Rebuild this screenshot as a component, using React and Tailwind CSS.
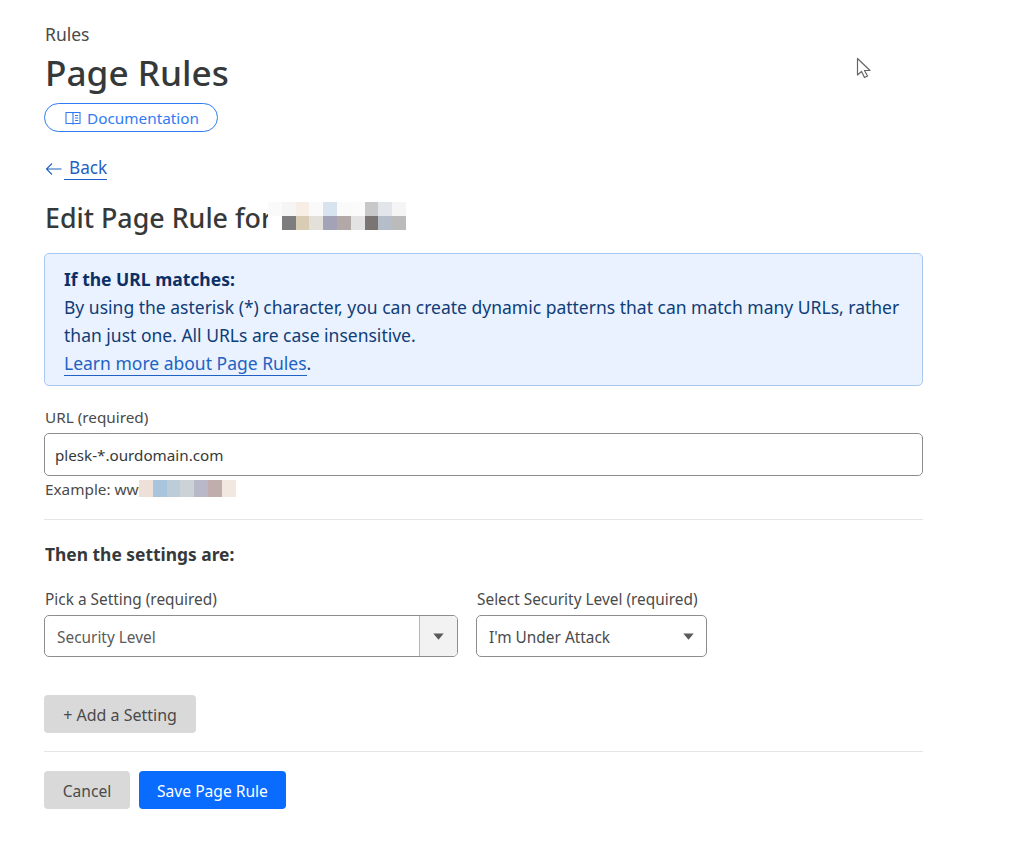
const headTop = ["#fafafa","#f5f5f5","#f7efe5","#fafafa","#d8e3f0","#fafafa","#fbfbfb","#c8c8c8","#e2e5ea","#f5f5f5"];
const headBottom = ["#ffffff","#7d7d80","#d8ccb5","#e3e0da","#a3a3b8","#b3a8a8","#e3e3e3","#7a7472","#b5bdc8","#bbbbbb"];
const exampleCells = ["#ede0d8","#a9c5dc","#bccdd9","#ccd3d6","#b8b8c8","#bfaead","#f3e8e0"];

function Cells({ colors, tall }) {
  return (
    <div className="flex">
      {colors.map((c, i) => (
        <div key={i} className={tall ? "w-[13.8px] h-[17px]" : "w-[13.8px] h-[14px]"} style={{ background: c }} />
      ))}
    </div>
  );
}

function Caret() {
  return (
    <svg width="11" height="7" viewBox="0 0 11 7" className="block mt-[1px]">
      <path d="M0.3 0.5h10.4L5.5 6.7z" fill="#5a5a5a" />
    </svg>
  );
}

export default function App() {
  return (
    <div className="relative w-[1024px] h-[846px] bg-white overflow-hidden text-[#36393a] font-['Noto_Sans',sans-serif]">
      <svg width="18" height="24" viewBox="0 0 18 24" className="absolute left-[856px] top-[57px]">
        <path d="M1.5 1.5v16.5l4-3.5 3 6 3-1.5-3-5.5h5.5z" fill="#fff" stroke="#666" strokeWidth="1.2" strokeLinejoin="round" />
      </svg>
      <div className="w-[879px] ml-[44px] pt-[23px]">
        <div className="text-[17.5px] leading-[22px] text-[#4a4a4a] ml-[1px]">Rules</div>
        <h1 className="text-[35.2px] leading-[48px] font-medium ml-[1px] mt-[3px]">Page Rules</h1>
        <a className="mt-[7px] flex w-[174px] h-[29px] items-center justify-center gap-[6px] rounded-full border border-[#2f7bf6] pl-[2px] text-[#2f7bf6] text-[15.3px] bg-white">
          <svg width="16" height="14" viewBox="0 0 16 14" fill="none" stroke="#2f7bf6" strokeWidth="1.1">
            <path d="M1 1.5h6.5l.5.5.5-.5H15v11H8.5l-.5.5-.5-.5H1z" />
            <path d="M8 2v10.5" />
            <path d="M10 4.5h3.2M10 7h3.2M10 9.5h3.2" />
          </svg>
          <span className="pt-[1px]">Documentation</span>
        </a>
        <div className="mt-[22px] flex items-start ml-[1px] h-[28px]">
          <svg width="18" height="14" viewBox="0 0 18 14" fill="none" stroke="#1f62c4" strokeWidth="1.1" className="mt-[8px]">
            <path d="M16.5 7H1.5M7 1.5 1.5 7 7 12.5" />
          </svg>
          <a className="ml-[1px] mt-[3px] pl-[5px] text-[17.2px] leading-[22px] text-[#1f62c4] border-b-[1.5px] border-[#1f62c4]">Back</a>
        </div>
        <div className="mt-[19px] flex items-start h-[34px]">
          <h2 className="w-[223px] whitespace-nowrap ml-[1px] text-[26.8px] leading-[34px] font-medium">Edit Page Rule for</h2>
          <div className="relative flex flex-col mt-[1px]">
            <Cells colors={headTop} />
            <Cells colors={headBottom} />
          </div>
        </div>
        <div className="mt-[18px] h-[133px] rounded-[5px] border border-[#a9c8f0] bg-[#e9f2fe] pl-[19px] pr-3 pt-[11px] text-[17.5px] leading-[28px] text-[#0f3d78]">
          <div className="font-bold text-[#0b2f66]">If the URL matches:</div>
          <div>By using the asterisk (*) character, you can create dynamic patterns that can match many URLs, rather</div>
          <div>than just one. All URLs are case insensitive.</div>
          <div><a className="text-[#1f62c4] border-b-[1.5px] border-[#1f62c4]">Learn more about Page Rules</a>.</div>
        </div>
        <label className="block mt-[20px] ml-[1px] text-[15.3px] leading-[22px] text-[#4a4a4a]">URL (required)</label>
        <div className="mt-[5px] flex h-[43px] items-center rounded-[5px] border border-[#8d8d8d] pl-[10px] pt-[1px] text-[15.2px] text-[#36393a]">plesk-*.ourdomain.com</div>
        <div className="mt-[2px] h-[20px] flex items-start text-[15.3px] leading-[22px] text-[#4a4a4a]">
          <span className="ml-[1px] w-[94px] whitespace-nowrap">Example: www</span>
          <div className="relative mt-[2px]"><Cells colors={exampleCells} tall /></div>
        </div>
        <div className="mt-[21px] border-t border-[#e5e5e5]" />
        <div className="mt-[22px] ml-[1px] text-[17.4px] leading-[24px] font-bold">Then the settings are:</div>
        <div className="mt-[23px] flex gap-[18px] text-[15.4px]">
          <div>
            <div className="ml-[1px] leading-[22px] text-[#4a4a4a]">Pick a Setting (required)</div>
            <div className="mt-[4px] flex w-[414px] h-[42px] rounded-[5px] border border-[#8d8d8d] overflow-hidden">
              <div className="flex-1 flex items-center pl-[12px] pt-[3px] text-[#5a5a5a]">Security Level</div>
              <div className="w-[38px] flex items-center justify-center bg-[#f2f2f2] border-l border-[#b5b5b5]"><Caret /></div>
            </div>
          </div>
          <div>
            <div className="ml-[1px] leading-[22px] text-[#4a4a4a]">Select Security Level (required)</div>
            <div className="mt-[4px] flex w-[231px] h-[42px] items-center justify-between rounded-[5px] border border-[#8d8d8d] pl-[12px] pr-[12px] text-[#4a4a4a]">
              <span className="pt-[3px]">I'm Under Attack</span>
              <Caret />
            </div>
          </div>
        </div>
        <button className="mt-[38px] block w-[152px] h-[38px] rounded-[4px] bg-[#d9d9d9] pt-[1px] text-[16px] text-[#4a4a4a]">+ Add a Setting</button>
        <div className="mt-[18px] border-t border-[#e5e5e5]" />
        <div className="mt-[19px] flex gap-[9px] text-[15.6px]">
          <button className="w-[86px] h-[38px] rounded-[4px] bg-[#d9d9d9] pt-[3px] text-[#4a4a4a]">Cancel</button>
          <button className="w-[147px] h-[38px] rounded-[4px] bg-[#0a6cff] pt-[3px] text-white">Save Page Rule</button>
        </div>
      </div>
    </div>
  );
}
